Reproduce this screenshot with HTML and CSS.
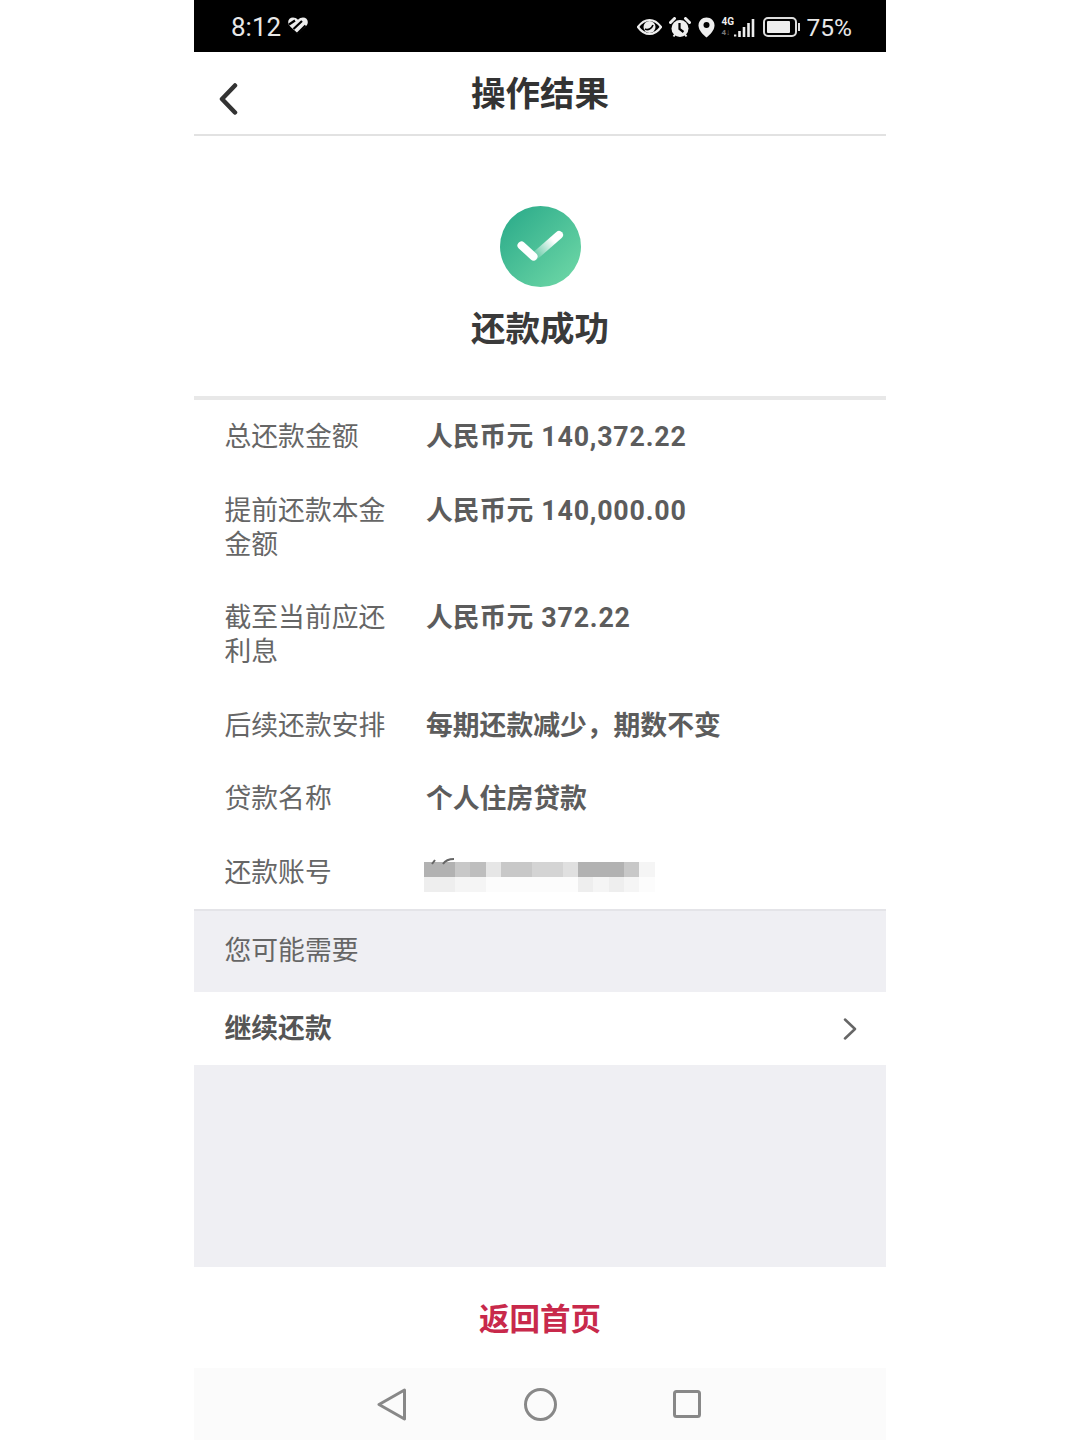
FILE: index.html
```html
<!DOCTYPE html>
<html lang="zh-CN">
<head>
  <meta charset="UTF-8" />
  <meta name="viewport" content="width=device-width, initial-scale=1.0"/>
  <title>操作结果</title>
  <link rel="stylesheet" href="styles.css">
</head>
<body>
  <div class="phone">
    <div class="statusbar">
      <div class="status-left">
        <span class="time">8:12</span>
        <svg class="icon-pay" width="20" height="17" viewBox="0 0 20 17">
          <path d="M5 0.500c1.800 0 3.500.8 5 2.200C11.500 1.300 13.200.5 15 .5c2.800 0 4.800 2 4.800 4.500 0 2-1 3.500-2.500 5L10 16.500 2.700 10C1.200 8.500.2 7 .2 5 .2 2.500 2.200.5 5 .5z" fill="#eee"/>
          <path d="M1 7.500L7 3.500M5.500 12L14 4M9.500 16.500l8-8" stroke="#000" stroke-width="2.200" fill="none"/>
        </svg>
      </div>
      <div class="status-right">
        <svg width="25" height="18" viewBox="0 0 25 18">
          <path d="M1 9C5 3.500 9 2 12.500 2S20 3.500 24 9c-4 5.500-8 7-11.500 7S5 14.500 1 9z" fill="none" stroke="#eee" stroke-width="2.200"/>
          <circle cx="12.500" cy="9" r="6" fill="#eee"/>
          <path d="M8 11c3 1.500 6.500 0 8-4" stroke="#000" stroke-width="1.600" fill="none"/>
        </svg>
        <svg width="22" height="21" viewBox="0 0 22 21">
          <circle cx="11" cy="11.500" r="8.500" fill="#eee"/>
          <path d="M1.500 5.500L5.500 1.500M20.500 5.500l-4-4" stroke="#eee" stroke-width="3" stroke-linecap="round"/>
          <path d="M10.500 6v6l4 3" stroke="#000" stroke-width="2.200" fill="none"/>
          <path d="M4.500 19.500l1.500-2M17.500 19.500l-1.500-2" stroke="#eee" stroke-width="2"/>
        </svg>
        <svg width="17" height="21" viewBox="0 0 17 21">
          <path d="M8.500 0.500C4 0.500 0.500 4 0.500 8.500c0 5 5 9.500 8 12 3-2.500 8-7 8-12C16.500 4 13 0.500 8.500 0.500z" fill="#eee"/>
          <circle cx="8.500" cy="8" r="3" fill="#000"/>
        </svg>
        <div class="signal">
          <div class="net">
            <span>4G</span>
            <span class="net-dim">4↓</span>
          </div>
          <svg width="21" height="21" viewBox="1 0 21 21">
            <path d="M2 17.500v2M6.500 14v6M11 10v10M15.500 6v14M20 2v18" stroke="#eee" stroke-width="2.600" fill="none"/>
          </svg>
        </div>
        <svg class="battery" width="37" height="20" viewBox="0 0 37 20">
          <rect x="1" y="1" width="32" height="18" rx="4" fill="none" stroke="#ddd" stroke-width="2"/>
          <rect x="4" y="4" width="23" height="12" rx="1" fill="#eee"/>
          <rect x="35" y="6" width="2" height="8" fill="#ddd"/>
        </svg>
        <span class="percent">75%</span>
      </div>
    </div>

    <div class="header">
      <svg class="back" width="20" height="32" viewBox="0 0 20 32">
        <path d="M16 2.500L3 16l13 13.500" fill="none" stroke="#333" stroke-width="4.500" stroke-linecap="round" stroke-linejoin="round"/>
      </svg>
      <h1>操作结果</h1>
    </div>

    <div class="result">
      <svg width="81" height="81" viewBox="0 0 81 81">
        <defs>
          <linearGradient id="disc" x1="0" y1="0" x2="1" y2="1">
            <stop offset="0" stop-color="#27a888"/>
            <stop offset="1" stop-color="#72daa8"/>
          </linearGradient>
          <linearGradient id="tail" gradientUnits="userSpaceOnUse" x1="34" y1="53" x2="60" y2="28">
            <stop offset="0.100" stop-color="#fff" stop-opacity="0.150"/>
            <stop offset="0.750" stop-color="#fff"/>
          </linearGradient>
        </defs>
        <circle cx="40.500" cy="40.500" r="40.500" fill="url(#disc)"/>
        <path d="M21.500 39.500L33.500 50.500" fill="none" stroke="#fff" stroke-width="8" stroke-linecap="round"/>
        <path d="M35 50L59 29" fill="none" stroke="url(#tail)" stroke-width="8" stroke-linecap="round"/>
      </svg>
      <h2>还款成功</h2>
    </div>

    <div class="details">
      <div class="row"><div class="label">总还款金额</div><div class="value">人民币元 <span class="num">140,372.22</span></div></div>
      <div class="row"><div class="label">提前还款本金金额</div><div class="value">人民币元 <span class="num">140,000.00</span></div></div>
      <div class="row"><div class="label">截至当前应还利息</div><div class="value">人民币元 <span class="num">372.22</span></div></div>
      <div class="row"><div class="label">后续还款安排</div><div class="value">每期还款减少，期数不变</div></div>
      <div class="row"><div class="label">贷款名称</div><div class="value">个人住房贷款</div></div>
      <div class="row">
        <div class="label">还款账号</div>
        <div class="value">
          <div class="mosaic">
            <svg class="mosaic-mark" width="32" height="8" viewBox="0 0 32 8">
              <path d="M8 7l3-4M19 7c2-3 6-5 11-5" fill="none" stroke="#666" stroke-width="2"/>
            </svg>
            <i class="a"></i><i class="a"></i><i class="c"></i><i class="b"></i><i class="f"></i><i class="c"></i><i class="c"></i><i class="d"></i><i class="d"></i><i class="e"></i><i class="a"></i><i class="a"></i><i class="a"></i><i class="c"></i><i class="h"></i>
            <i class="g"></i><i class="g"></i><i class="h"></i><i class="h"></i><i class="w"></i><i class="w"></i><i class="w"></i><i class="w"></i><i class="w"></i><i class="w"></i><i class="g"></i><i class="h"></i><i class="g"></i><i class="h"></i><i class="w"></i>
          </div>
        </div>
      </div>
    </div>

    <div class="section-title">您可能需要</div>
    <div class="link-row">
      <span class="link-text">继续还款</span>
      <svg width="14" height="22" viewBox="0 0 14 22">
        <path d="M2 1.500L12 11 2 20.500" fill="none" stroke="#666" stroke-width="2.500" stroke-linecap="round" stroke-linejoin="round"/>
      </svg>
    </div>
    <div class="filler"></div>

    <div class="home-btn">返回首页</div>

    <div class="navbar">
      <svg width="30" height="33" viewBox="0 0 30 33">
        <path d="M27.500 2L2 16.500 27.500 31z" fill="none" stroke="#888" stroke-width="3" stroke-linejoin="round"/>
      </svg>
      <svg width="33" height="33" viewBox="0 0 33 33">
        <circle cx="16.500" cy="16.500" r="15" fill="none" stroke="#888" stroke-width="3"/>
      </svg>
      <svg width="28" height="28" viewBox="0 0 28 28">
        <rect x="1.500" y="1.500" width="25" height="25" rx="2" fill="none" stroke="#888" stroke-width="3"/>
      </svg>
    </div>
  </div>
</body>
</html>
```

FILE: styles.css
```css
* {
  margin: 0;
  padding: 0;
  box-sizing: border-box;
}

body {
  font-family: "Noto Sans CJK SC", "Noto Sans", sans-serif;
  background-color: #fff;
}

.phone {
  width: 692px;
  height: 1440px;
  margin: 0 auto;
  display: flex;
  flex-direction: column;
  overflow: hidden;
}

.statusbar {
  height: 52px;
  flex: none;
  background-color: #000;
  color: #e8e8e8;
  display: flex;
  align-items: center;
  justify-content: space-between;
  padding: 2px 34px 0 37px;
  font-family: Roboto, sans-serif;
}

.status-left,
.status-right {
  display: flex;
  align-items: center;
}

.time {
  font-size: 26px;
}

.icon-pay {
  margin: -4px 0 0 7px;
}

.status-right {
  gap: 7px;
}

.signal {
  display: flex;
  align-items: flex-end;
}

.net {
  width: 12px;
  display: flex;
  flex-direction: column;
  font-size: 10px;
  font-weight: bold;
  line-height: 12px;
  color: #eee;
}

.net-dim {
  font-size: 8px;
  line-height: 10px;
  color: #777;
}

.battery {
  margin-left: 1px;
}

.percent {
  font-size: 24.5px;
}

.header {
  height: 84px;
  flex: none;
  border-bottom: 2px solid #e2e2e2;
  display: grid;
  grid-template-columns: 1fr auto 1fr;
  align-items: center;
}

.back {
  margin: 11px 0 0 25px;
}

.header h1 {
  font-size: 34.5px;
  line-height: 44px;
  margin-bottom: 4px;
  color: #333;
  font-weight: bold;
}

.result {
  height: 264px;
  flex: none;
  padding-top: 70px;
  display: flex;
  flex-direction: column;
  align-items: center;
  border-bottom: 4px solid #e8e8e8;
}

.result h2 {
  font-size: 34.5px;
  line-height: 44px;
  margin-top: 17px;
  color: #3a3a3a;
  font-weight: bold;
}

.details {
  flex: none;
  border-bottom: 2px solid #e4e4e8;
}

.row {
  display: grid;
  grid-template-columns: 201.5px 1fr;
  padding: 18px 30px 21.5px 30.5px;
  font-size: 26.8px;
  line-height: 34px;
}

.label {
  color: #666;
  padding-right: 38px;
}

.value {
  color: #5c5c5c;
  font-weight: bold;
}

.num {
  font-family: Roboto, sans-serif;
  line-height: 0;
  margin-left: 2px;
  letter-spacing: 0.8px;
}

.mosaic {
  position: relative;
  display: grid;
  grid-template-columns: repeat(15, 15.4px);
  grid-auto-rows: 15px;
  margin: 8px 0 -8px -2px;
  height: 30px;
  filter: blur(0.6px);
}

.mosaic-mark {
  position: absolute;
  left: 0;
  top: -5px;
}

.a { background-color: #b2b2b2; }
.b { background-color: #bebebe; }
.c { background-color: #c8c8c8; }
.d { background-color: #d4d4d4; }
.e { background-color: #e0e0e0; }
.f { background-color: #e6e6e6; }
.g { background-color: #eeeeee; }
.h { background-color: #f5f5f5; }
.w { background-color: #fcfcfc; }

.section-title {
  height: 81px;
  flex: none;
  background-color: #efeff3;
  color: #666;
  font-size: 26.8px;
  display: flex;
  align-items: center;
  padding: 0 0 6px 30.5px;
}

.link-row {
  height: 73px;
  flex: none;
  display: flex;
  align-items: center;
  justify-content: space-between;
  padding: 0 29px 0 30.5px;
  font-size: 26.8px;
  font-weight: bold;
  color: #555;
}

.link-text {
  margin-bottom: 4px;
}

.filler {
  height: 202px;
  flex: none;
  background-color: #efeff3;
}

.home-btn {
  height: 101px;
  flex: none;
  display: flex;
  align-items: center;
  justify-content: center;
  font-size: 30.5px;
  font-weight: bold;
  padding-bottom: 2px;
  color: #c8294b;
}

.navbar {
  flex: 1;
  background-color: #fbfbfb;
  display: flex;
  align-items: center;
  justify-content: center;
  gap: 116.5px;
  padding-right: 2px;
}
```
